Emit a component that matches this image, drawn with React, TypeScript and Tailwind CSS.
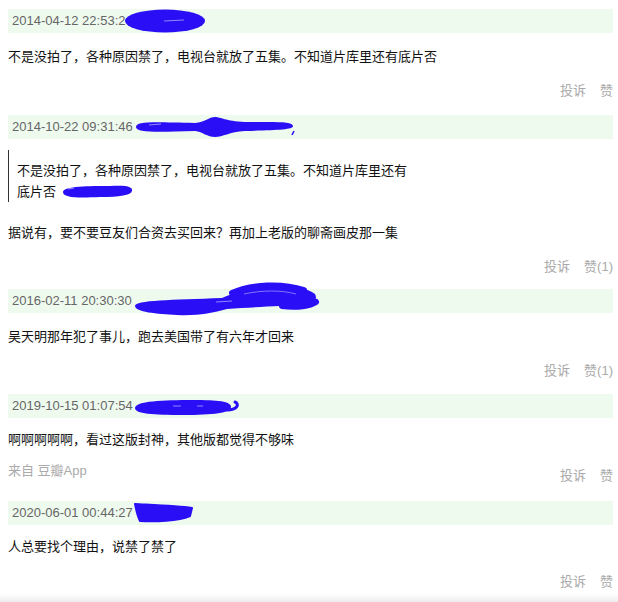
const BLUE = "#2a0ef6";

function Scribble1() {
  return (
    <svg width="82" height="24" viewBox="0 0 82 24" className="inline-block align-top -ml-px">
      <ellipse cx="41" cy="12" rx="40" ry="11.5" fill={BLUE} />
      <path d="M40 12 L60 11" stroke="#8f86ff" strokeWidth="1" />
    </svg>
  );
}

function Scribble2() {
  return (
    <svg width="164" height="24" viewBox="0 0 164 24" className="inline-block align-top">
      <path
        d="M3 12 C3 6 20 7 62 8 C72 7 76 2 82 2 C88 2 92 6 112 7 C142 7 160 6 160 11 C160 15 142 15 112 16 C96 17 90 22 82 22 C74 22 70 17 62 16 C25 17 3 18 3 12 Z"
        fill={BLUE}
      />
      <path d="M16 10 L28 9" stroke="#8f86ff" strokeWidth="1.2" />
      <path d="M161 16 L159 20" stroke={BLUE} strokeWidth="1.5" />
    </svg>
  );
}

function ScribbleQuote() {
  return (
    <svg width="74" height="18" viewBox="0 0 74 18" className="inline-block align-middle -mt-[3px]">
      <path
        d="M3 10 C3 4 30 4 50 4 C68 3 73 5 72 9 C71 13 60 15 40 15 C18 16 3 16 3 10 Z"
        fill={BLUE}
      />
      <path d="M8 7 L14 6" stroke="#9a90ff" strokeWidth="1.2" />
    </svg>
  );
}

function Scribble3() {
  return (
    <span className="relative inline-block w-[186px] h-[24px] align-top">
      <svg
        width="186"
        height="36"
        viewBox="0 0 186 36"
        className="absolute left-0 -top-[7px] overflow-visible"
      >
        <path
          d="M3 24 C3 18 40 18 90 16 C105 10 115 4 140 4 C160 4 176 6 183 12 C186 18 182 22 170 23 C150 24 120 25 95 27 C80 31 65 34 45 33 C25 32 3 30 3 24 Z"
          fill={BLUE}
        />
        <g stroke={BLUE} strokeWidth="6" strokeLinecap="round" fill="none">
          <path d="M100 11 C120 2 150 1 172 8" />
          <path d="M150 24 C165 26 178 24 184 20" />
        </g>
        <path d="M84 20 L100 19" stroke="#8f86ff" strokeWidth="1" />
        <path d="M112 12 C130 8 150 8 164 12" stroke="#7f76ff" strokeWidth="1" fill="none" />
      </svg>
    </span>
  );
}

function Scribble4() {
  return (
    <svg width="108" height="24" viewBox="0 0 108 24" className="inline-block align-top">
      <path
        d="M2 14 C2 7 30 6 60 6 C85 6 98 7 98 13 C98 19 80 21 50 21 C20 21 2 20 2 14 Z"
        fill={BLUE}
      />
      <path d="M94 16 C104 16 107 10 102 8" stroke={BLUE} strokeWidth="3" fill="none" strokeLinecap="round" />
      <path d="M40 12 L48 12" stroke="#8f86ff" strokeWidth="1" />
      <path d="M64 12 L70 12" stroke="#8f86ff" strokeWidth="1" />
    </svg>
  );
}

function Scribble5() {
  return (
    <svg width="62" height="24" viewBox="0 0 62 24" className="inline-block align-top">
      <path
        d="M2 3 C20 4 45 5 59 7 L57 15 C45 20 22 21 7 20 C4 14 3 8 2 3 Z"
        fill={BLUE}
        stroke={BLUE}
        strokeWidth="2"
        strokeLinejoin="round"
      />
    </svg>
  );
}

function Header({ date, mark }: { date: string; mark: React.ReactNode }) {
  return (
    <div className="h-6 bg-[#effaef] px-1 text-[13px] leading-6 text-[#666] whitespace-nowrap">
      <span className="align-top">{date}</span>
      {mark}
    </div>
  );
}

function Actions({ likes }: { likes?: number }) {
  return (
    <div className="flex justify-end gap-[14px] text-[13px] leading-5 text-[#aaa]">
      <span>投诉</span>
      <span>{likes ? `赞(${likes})` : "赞"}</span>
    </div>
  );
}

export default function App() {
  return (
    <div
      className="w-[618px] min-h-[602px] bg-white pt-[9px] pl-2 pr-[5px] text-[#111]"
      style={{ fontFamily: '"Liberation Sans", "Noto Sans CJK SC", sans-serif' }}
    >
      {/* 1 */}
      <div className="mb-[14px]">
        <Header date="2014-04-12 22:53:2" mark={<Scribble1 />} />
        <p className="mt-[13px] text-[13px] leading-[21px]">
          不是没拍了，各种原因禁了，电视台就放了五集。不知道片库里还有底片否
        </p>
        <div className="mt-[14px]">
          <Actions />
        </div>
      </div>

      {/* 2 */}
      <div className="mb-[12px]">
        <Header date="2014-10-22 09:31:46" mark={<Scribble2 />} />
        <blockquote className="mt-[11px] w-[402px] border-l border-[#333] pl-2 pt-[10px] text-[13px] leading-[21px]">
          不是没拍了，各种原因禁了，电视台就放了五集。不知道片库里还有底片否 <ScribbleQuote />
        </blockquote>
        <p className="mt-[20px] text-[13px] leading-[21px]">
          据说有，要不要豆友们合资去买回来？再加上老版的聊斋画皮那一集
        </p>
        <div className="mt-[14px]">
          <Actions likes={1} />
        </div>
      </div>

      {/* 3 */}
      <div className="mb-[13px]">
        <Header date="2016-02-11 20:30:30" mark={<Scribble3 />} />
        <p className="mt-[13px] text-[13px] leading-[21px]">
          吴天明那年犯了事儿，跑去美国带了有六年才回来
        </p>
        <div className="mt-[14px]">
          <Actions likes={1} />
        </div>
      </div>

      {/* 4 */}
      <div className="mb-[15px]">
        <Header date="2019-10-15 01:07:54" mark={<Scribble4 />} />
        <p className="mt-[11px] text-[13px] leading-[21px]">
          啊啊啊啊啊，看过这版封神，其他版都觉得不够味
        </p>
        <div className="mt-[11px] flex items-start justify-between">
          <span className="text-[13px] leading-5 text-[#aaa]">来自 豆瓣App</span>
          <div className="mt-[5px]">
            <Actions />
          </div>
        </div>
      </div>

      {/* 5 */}
      <div>
        <Header date="2020-06-01 00:44:27" mark={<Scribble5 />} />
        <p className="mt-[11px] text-[13px] leading-[21px]">人总要找个理由，说禁了禁了</p>
        <div className="mt-[15px]">
          <Actions />
        </div>
      </div>
      <div className="mt-[2px] -ml-2 -mr-[5px] h-[8px] bg-gradient-to-b from-white to-[#ececec]" />
    </div>
  );
}
